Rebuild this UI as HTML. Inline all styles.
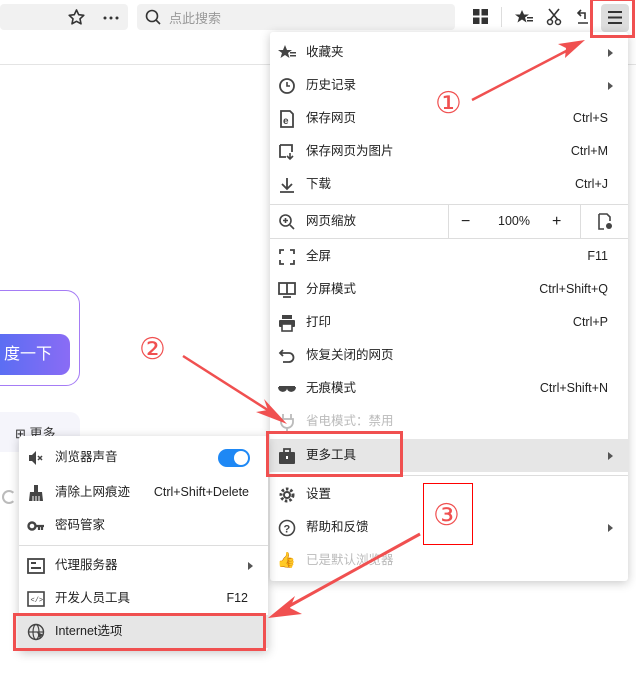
<!DOCTYPE html>
<html><head><meta charset="utf-8"><style>
*{margin:0;padding:0;box-sizing:border-box}
body{width:636px;height:693px;background:#fff;position:relative;overflow:hidden;font-family:"Liberation Sans","Noto Sans CJK SC",sans-serif;font-size:12.5px;color:#222}
.abs{position:absolute}
.menu{position:absolute;background:#fff;box-shadow:0 2px 10px rgba(0,0,0,.22);border-radius:3px}
.it{position:absolute;left:0;right:0;height:33px;line-height:33px}
.it .t{position:absolute;left:36px}
.it .k{position:absolute;right:20px;font-size:12.5px}
.it .ar{position:absolute;right:15px;top:13px;width:0;height:0;border-left:5px solid #555;border-top:4px solid transparent;border-bottom:4px solid transparent}
.it svg{position:absolute;left:8px;top:8px}
.sep{position:absolute;left:0;right:0;height:1px;background:#ddd}
.dis{color:#bbb}
.red{position:absolute;border:3px solid #f05050}
.num{position:absolute;color:#f05050;font-size:30px;font-family:"DejaVu Sans",sans-serif}
</style></head><body>
<!-- toolbar -->
<div class="abs" style="left:0;top:4px;width:128px;height:26px;background:#f1f1f1;border-radius:4px"></div>
<svg class="abs" style="left:68px;top:9px" width="17" height="16"><path d="M8.5 1l2.2 4.7 5.1.6-3.8 3.5 1 5-4.5-2.5-4.5 2.5 1-5L1.2 6.3l5.1-.6z" fill="none" stroke="#333" stroke-width="1.6" stroke-linejoin="round"/></svg>
<svg class="abs" style="left:103px;top:16px" width="16" height="4"><circle cx="2" cy="2" r="1.5" fill="#333"/><circle cx="8" cy="2" r="1.5" fill="#333"/><circle cx="14" cy="2" r="1.5" fill="#333"/></svg>
<div class="abs" style="left:137px;top:4px;width:318px;height:26px;background:#f1f1f1;border-radius:4px"></div>
<svg class="abs" style="left:145px;top:9px" width="16" height="16"><circle cx="7" cy="7" r="5.5" fill="none" stroke="#333" stroke-width="1.6"/><line x1="11" y1="11" x2="15" y2="15" stroke="#333" stroke-width="1.6"/></svg>
<div class="abs" style="left:169px;top:8px;color:#999;font-size:13px">点此搜索</div>
<svg class="abs" style="left:473px;top:9px" width="15" height="15"><rect x="0" y="0" width="6.5" height="6.5" fill="#333"/><rect x="8.5" y="0" width="6.5" height="6.5" fill="#333"/><rect x="0" y="8.5" width="6.5" height="6.5" fill="#333"/><rect x="8.5" y="8.5" width="6.5" height="6.5" fill="#333"/></svg>
<div class="abs" style="left:501px;top:7px;width:1px;height:20px;background:#ddd"></div>
<svg class="abs" style="left:515px;top:9px" width="18" height="16"><path d="M7 1l2 4.5h5l-4 3 1.5 5-4.5-3-4.5 3 1.5-5-4-3h5z" fill="#333"/><rect x="12" y="8" width="6" height="1.5" fill="#333"/><rect x="12" y="11" width="6" height="1.5" fill="#333"/></svg>
<svg class="abs" style="left:546px;top:8px" width="16" height="18"><path d="M3 1l9 11M13 1L4 12" stroke="#333" stroke-width="1.6"/><circle cx="4" cy="14" r="2.5" fill="none" stroke="#333" stroke-width="1.5"/><circle cx="12" cy="14" r="2.5" fill="none" stroke="#333" stroke-width="1.5"/></svg>
<svg class="abs" style="left:577px;top:8px" width="12" height="18"><path d="M4 2L1 5l3 3M1 5h7v6M1 15h10" fill="none" stroke="#333" stroke-width="1.6"/></svg>
<div class="abs" style="left:601px;top:4px;width:28px;height:28px;background:#ddd;border-radius:4px"></div>
<svg class="abs" style="left:608px;top:11px" width="14" height="13"><rect y="0" width="14" height="2" fill="#333"/><rect y="5.5" width="14" height="2" fill="#333"/><rect y="11" width="14" height="2" fill="#333"/></svg>
<div class="abs" style="left:0;top:64px;width:636px;height:1px;background:#e4e4e4"></div>
<!-- left page -->
<div class="abs" style="left:-20px;top:290px;width:100px;height:96px;border:1px solid #a57cf5;border-radius:14px"></div>
<div class="abs" style="left:-20px;top:334px;width:90px;height:41px;border-radius:10px;background:linear-gradient(90deg,#4e6ef2,#8a6cf5);color:#fff;font-size:16px;line-height:41px;text-align:right;padding-right:18px">度一下</div>
<div class="abs" style="left:-10px;top:412px;width:90px;height:40px;background:#f5f5fb;border-radius:10px"></div>
<div class="abs" style="left:15px;top:423px;font-size:13px;color:#333">⊞ 更多</div>
<div class="abs" style="left:2px;top:490px;width:14px;height:14px;border:2px solid #bbb;border-radius:50%;border-right-color:transparent"></div>
<!-- main menu -->
<div class="menu" style="left:270px;top:32px;width:358px;height:549px">
 <div class="it" style="top:4px"><svg width="18" height="18"><path d="M7 1l2 5h5l-4 3 1.5 5-4.5-3-4.5 3 1.5-5-4-3h5z" fill="#444"/><rect x="12" y="8" width="6" height="1.5" fill="#444"/><rect x="12" y="11" width="6" height="1.5" fill="#444"/></svg><span class="t">收藏夹</span><span class="ar"></span></div>
 <div class="it" style="top:37px"><svg width="18" height="18"><circle cx="9" cy="9" r="7" fill="none" stroke="#444" stroke-width="1.8"/><path d="M9 5v4h3" fill="none" stroke="#444" stroke-width="1.6"/></svg><span class="t">历史记录</span><span class="ar"></span></div>
 <div class="it" style="top:70px"><svg width="18" height="18"><path d="M3 1h9l3 3v13H3z" fill="none" stroke="#444" stroke-width="1.8"/><text x="5" y="14" font-size="10" fill="#444" font-weight="bold" font-family="Liberation Sans">e</text></svg><span class="t">保存网页</span><span class="k">Ctrl+S</span></div>
 <div class="it" style="top:103px"><svg width="18" height="18"><path d="M2 2h12v7M8 14H2V2" fill="none" stroke="#444" stroke-width="1.8"/><path d="M12 10v6M9 13l3 3 3-3" fill="none" stroke="#444" stroke-width="1.6"/></svg><span class="t">保存网页为图片</span><span class="k">Ctrl+M</span></div>
 <div class="it" style="top:136px"><svg width="18" height="18"><path d="M9 2v10M4 8l5 5 5-5M2 16h14" fill="none" stroke="#444" stroke-width="1.8"/></svg><span class="t">下载</span><span class="k">Ctrl+J</span></div>
 <div class="sep" style="top:172px"></div>
 <div class="it" style="top:173px"><svg width="18" height="18"><circle cx="7.5" cy="7.5" r="5.5" fill="none" stroke="#444" stroke-width="1.6"/><path d="M5 7.5h5M7.5 5v5M12 12l4 4" stroke="#444" stroke-width="1.6"/></svg><span class="t">网页缩放</span>
  <div class="abs" style="left:178px;top:0;width:1px;height:33px;background:#ddd"></div>
  <div class="abs" style="left:191px;top:0;font-size:16px">−</div>
  <div class="abs" style="left:228px;top:0">100%</div>
  <div class="abs" style="left:282px;top:0;font-size:16px">+</div>
  <div class="abs" style="left:310px;top:0;width:1px;height:33px;background:#ddd"></div>
  <svg style="left:326px" width="18" height="18"><path d="M3 1h8l3 3v4M8 16H3V1" fill="none" stroke="#444" stroke-width="1.6"/><circle cx="13" cy="13" r="3" fill="#444"/></svg></div>
 <div class="sep" style="top:206px"></div>
 <div class="it" style="top:208px"><svg width="18" height="18"><path d="M2 6V2h4M12 2h4v4M16 12v4h-4M6 16H2v-4" fill="none" stroke="#444" stroke-width="1.8"/></svg><span class="t">全屏</span><span class="k">F11</span></div>
 <div class="it" style="top:241px"><svg width="18" height="18"><rect x="1" y="2" width="16" height="11" fill="none" stroke="#444" stroke-width="1.8"/><path d="M9 2v11M5 16h8" stroke="#444" stroke-width="1.8"/></svg><span class="t">分屏模式</span><span class="k">Ctrl+Shift+Q</span></div>
 <div class="it" style="top:274px"><svg width="18" height="18"><rect x="4" y="1" width="10" height="4" fill="#444"/><rect x="1" y="6" width="16" height="7" rx="1" fill="#444"/><rect x="4" y="10" width="10" height="7" fill="#fff" stroke="#444" stroke-width="1.6"/></svg><span class="t">打印</span><span class="k">Ctrl+P</span></div>
 <div class="it" style="top:307px"><svg width="18" height="18"><path d="M5 3L2 6l3 3M2 6h9a4 4 0 010 9H5" fill="none" stroke="#444" stroke-width="1.8"/></svg><span class="t">恢复关闭的网页</span></div>
 <div class="it" style="top:340px"><svg width="18" height="18"><path d="M1 7h16M1 7c0 5 7 5 7 1M17 7c0 5-7 5-7 1" fill="#444" stroke="#444" stroke-width="2"/></svg><span class="t">无痕模式</span><span class="k">Ctrl+Shift+N</span></div>
 <div class="it dis" style="top:373px"><svg width="18" height="18"><path d="M5 1v5M13 1v5M3 6h12v3a6 6 0 01-12 0zM9 15v3" fill="none" stroke="#bbb" stroke-width="1.8"/></svg><span class="t">省电模式：禁用</span></div>
 <div class="it" style="top:407px;background:#e6e6e6"><svg width="18" height="18"><rect x="1" y="5" width="16" height="12" rx="1" fill="#444"/><path d="M6 5V2h6v3" fill="none" stroke="#444" stroke-width="1.8"/><rect x="8" y="9" width="2" height="3" fill="#fff"/></svg><span class="t">更多工具</span><span class="ar"></span></div>
 <div class="sep" style="top:443px"></div>
 <div class="it" style="top:446px"><svg width="18" height="18"><circle cx="9" cy="9" r="6" fill="none" stroke="#444" stroke-width="3" stroke-dasharray="2.5 2"/><circle cx="9" cy="9" r="4" fill="#444"/><circle cx="9" cy="9" r="2" fill="#fff"/></svg><span class="t">设置</span></div>
 <div class="it" style="top:479px"><svg width="18" height="18"><circle cx="9" cy="9" r="7.5" fill="none" stroke="#444" stroke-width="1.6"/><text x="5.5" y="13.5" font-size="11" font-weight="bold" fill="#444" font-family="Liberation Sans">?</text></svg><span class="t">帮助和反馈</span><span class="ar"></span></div>
 <div class="it dis" style="top:512px"><span class="abs" style="left:7px;top:0;color:#f0d08a;font-size:15px">👍</span><span class="t">已是默认浏览器</span></div>
</div>
<!-- sub menu -->
<div class="menu" style="left:19px;top:436px;width:249px;height:215px">
 <div class="it" style="top:5px"><svg width="18" height="18"><path d="M2 6h3l4-4v14l-4-4H2z" fill="#444"/><path d="M11 7l4 4M15 7l-4 4" stroke="#444" stroke-width="1.5"/></svg><span class="t">浏览器声音</span>
  <div class="abs" style="left:199px;top:8px;width:32px;height:18px;border-radius:9px;background:#1e88f5"></div><div class="abs" style="left:215px;top:10px;width:14px;height:14px;border-radius:50%;background:#fff"></div></div>
 <div class="it" style="top:40px"><svg width="18" height="18"><rect x="7" y="1" width="4" height="7" fill="#444"/><path d="M2 17l1-9h12l1 9z" fill="#444"/><path d="M6 12v5M9 12v5M12 12v5" stroke="#fff"/></svg><span class="t">清除上网痕迹</span><span class="k" style="right:19px">Ctrl+Shift+Delete</span></div>
 <div class="it" style="top:73px"><svg width="18" height="18"><circle cx="5" cy="9" r="3.5" fill="none" stroke="#444" stroke-width="2.4"/><path d="M8 9h9M12 9v4M15 9v4" stroke="#444" stroke-width="2.2"/></svg><span class="t">密码管家</span></div>
 <div class="sep" style="top:109px"></div>
 <div class="it" style="top:113px"><svg width="18" height="18"><rect x="1" y="2" width="16" height="14" fill="none" stroke="#444" stroke-width="1.8"/><path d="M4 6h5M4 11h10" stroke="#444" stroke-width="2"/></svg><span class="t">代理服务器</span><span class="ar"></span></div>
 <div class="it" style="top:146px"><svg width="18" height="18"><rect x="1" y="2" width="16" height="14" fill="none" stroke="#444" stroke-width="1.6"/><text x="3.5" y="12" font-size="7" fill="#444" font-family="Liberation Mono">&lt;/&gt;</text></svg><span class="t">开发人员工具</span><span class="k">F12</span></div>
 <div class="it" style="top:179px;background:#e6e6e6"><svg width="18" height="18"><circle cx="9" cy="9" r="7.5" fill="none" stroke="#444" stroke-width="1.4"/><ellipse cx="9" cy="9" rx="3" ry="7.5" fill="none" stroke="#444" stroke-width="1.2"/><path d="M1.5 9h15" stroke="#444" stroke-width="1.2"/><path d="M10 9l7 3-3 1-1 3z" fill="#444"/></svg><span class="t">Internet选项</span></div>
</div>
<!-- annotations -->
<div class="red" style="left:590px;top:-2px;width:45px;height:40px"></div>
<div class="red" style="left:266px;top:431px;width:137px;height:46px"></div>
<div class="red" style="left:13px;top:613px;width:253px;height:38px"></div>
<div class="abs" style="left:423px;top:483px;width:50px;height:62px;border:1px solid #f00"></div>
<div class="num" style="left:435px;top:86px">①</div>
<div class="num" style="left:139px;top:332px">②</div>
<div class="num" style="left:433px;top:498px">③</div>
<svg class="abs" style="left:0;top:0" width="636" height="693">
 <path d="M472 100L572 48" stroke="#f05050" stroke-width="2.5"/>
 <path d="M585 40L558 44 566 48 565 58z" fill="#f05050"/>
 <path d="M183 356L274 414" stroke="#f05050" stroke-width="2.5"/>
 <path d="M287 424L264 399 268 410 256 412z" fill="#f05050"/>
 <path d="M420 534L282 610" stroke="#f05050" stroke-width="3"/>
 <path d="M268 618L295 596 290 608 302 614z" fill="#f05050"/>
</svg>
</body></html>
